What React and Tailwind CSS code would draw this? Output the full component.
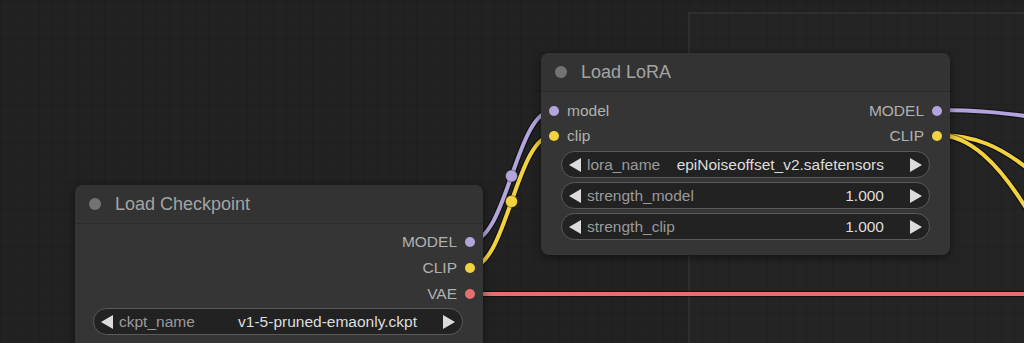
import React from 'react';

const FONT = { fontFamily: '"Liberation Sans", Arial, sans-serif' };

const Arrow = ({ dir }) => (
  <svg width="12" height="14" viewBox="0 0 12 14" className="shrink-0">
    {dir === 'left' ? (
      <polygon points="12,0 12,14 0,7" fill="#dcdcdc" />
    ) : (
      <polygon points="0,0 0,14 12,7" fill="#dcdcdc" />
    )}
  </svg>
);

const Dot = ({ color }) => (
  <span className={`block w-[10px] h-[10px] rounded-full shrink-0 ${color}`} />
);

const Widget = ({ label, value }) => (
  <div className="h-[27px] rounded-full border border-[#5a5a5a] bg-[#222222] flex items-center px-[7px]">
    <Arrow dir="left" />
    <span className="ml-[6px] text-[#9a9a9a] text-[15.5px] leading-none whitespace-nowrap">{label}</span>
    <span className="flex-1 text-right mr-[26px] text-[#dddddd] text-[15.5px] leading-none whitespace-nowrap">
      {value}
    </span>
    <Arrow dir="right" />
  </div>
);

const Title = ({ text }) => (
  <div className="h-[39px] flex items-center border-b border-[#2b2b2b] bg-[#333333] rounded-t-[8px]">
    <span className="ml-[14px] w-[12px] h-[12px] rounded-full bg-[#737373]" />
    <span className="ml-[14px] text-[18px] text-[#a3a3a3] leading-none">{text}</span>
  </div>
);

const InSlot = ({ label, color }) => (
  <div className="flex items-center">
    <span className="ml-[8px]" />
    <Dot color={color} />
    <span className="ml-[8px] text-[15.5px] text-[#b0b0b0] leading-none">{label}</span>
  </div>
);

const OutSlot = ({ label, color }) => (
  <div className="flex items-center justify-end">
    <span className="mr-[8px] text-[15.5px] text-[#b0b0b0] leading-none">{label}</span>
    <Dot color={color} />
    <span className="mr-[8px]" />
  </div>
);

const Wire = ({ d, color }) => (
  <g>
    <path d={d} stroke="#000" strokeOpacity="0.45" strokeWidth="6.5" fill="none" strokeLinecap="round" />
    <path d={d} stroke={color} strokeWidth="4" fill="none" strokeLinecap="round" />
  </g>
);

export default function App() {
  return (
    <div
      style={FONT}
      className="relative w-[1024px] h-[343px] overflow-hidden bg-[#222222] bg-[linear-gradient(to_right,rgba(0,0,0,0.1)_1px,transparent_1px),linear-gradient(to_bottom,rgba(0,0,0,0.1)_1px,transparent_1px)] bg-[size:13px_13px]"
    >
      {/* group frame */}
      <div className="absolute left-[688px] top-[12px] right-[-10px] bottom-[-10px] border-l-2 border-t-2 border-[#2e2e2e] bg-white/[0.01]" />

      {/* links */}
      <svg className="absolute inset-0" width="1024" height="343">
        <Wire d="M469 242 C508 242 515 110 554 110" color="#b3a4dc" />
        <Wire d="M469 268 C508 268 515 135 554 135" color="#f2d33f" />
        <Wire d="M469 294 L1030 294" color="#e46f6c" />
        <Wire d="M937 110 C985 110 1010 114 1040 118" color="#b3a4dc" />
        <Wire d="M937 135 C975 135 1000 146 1032 172" color="#f2d33f" />
        <Wire d="M937 135 C968 135 998 160 1032 218" color="#f2d33f" />
        <circle cx="511.5" cy="176" r="6" fill="#b3a4dc" stroke="#000" strokeOpacity="0.35" />
        <circle cx="511.5" cy="201.5" r="6" fill="#f2d33f" stroke="#000" strokeOpacity="0.35" />
      </svg>

      {/* Load LoRA node */}
      <div className="absolute left-[541px] top-[53px] w-[409px] h-[202px] rounded-[8px] bg-[#353535] shadow-[0_2px_8px_rgba(0,0,0,0.5)] flex flex-col">
        <Title text="Load LoRA" />
        <div className="pt-[6px]">
          <div className="h-[25px] flex items-center justify-between">
            <InSlot label="model" color="bg-[#b3a4dc]" />
            <OutSlot label="MODEL" color="bg-[#b3a4dc]" />
          </div>
          <div className="h-[25px] flex items-center justify-between">
            <InSlot label="clip" color="bg-[#f2d33f]" />
            <OutSlot label="CLIP" color="bg-[#f2d33f]" />
          </div>
        </div>
        <div className="mt-[3px] px-[20px] flex flex-col gap-[4px]">
          <Widget label="lora_name" value="epiNoiseoffset_v2.safetensors" />
          <Widget label="strength_model" value="1.000" />
          <Widget label="strength_clip" value="1.000" />
        </div>
      </div>

      {/* Load Checkpoint node */}
      <div className="absolute left-[75px] top-[185px] w-[408px] h-[200px] rounded-[8px] bg-[#353535] shadow-[0_2px_8px_rgba(0,0,0,0.5)] flex flex-col">
        <Title text="Load Checkpoint" />
        <div className="pt-[5px]">
          <div className="h-[26px] flex items-center justify-end">
            <OutSlot label="MODEL" color="bg-[#b3a4dc]" />
          </div>
          <div className="h-[26px] flex items-center justify-end">
            <OutSlot label="CLIP" color="bg-[#f2d33f]" />
          </div>
          <div className="h-[26px] flex items-center justify-end">
            <OutSlot label="VAE" color="bg-[#e46f6c]" />
          </div>
        </div>
        <div className="mt-[1px] pl-[18px] pr-[20px]">
          <Widget label="ckpt_name" value="v1-5-pruned-emaonly.ckpt" />
        </div>
      </div>
    </div>
  );
}
